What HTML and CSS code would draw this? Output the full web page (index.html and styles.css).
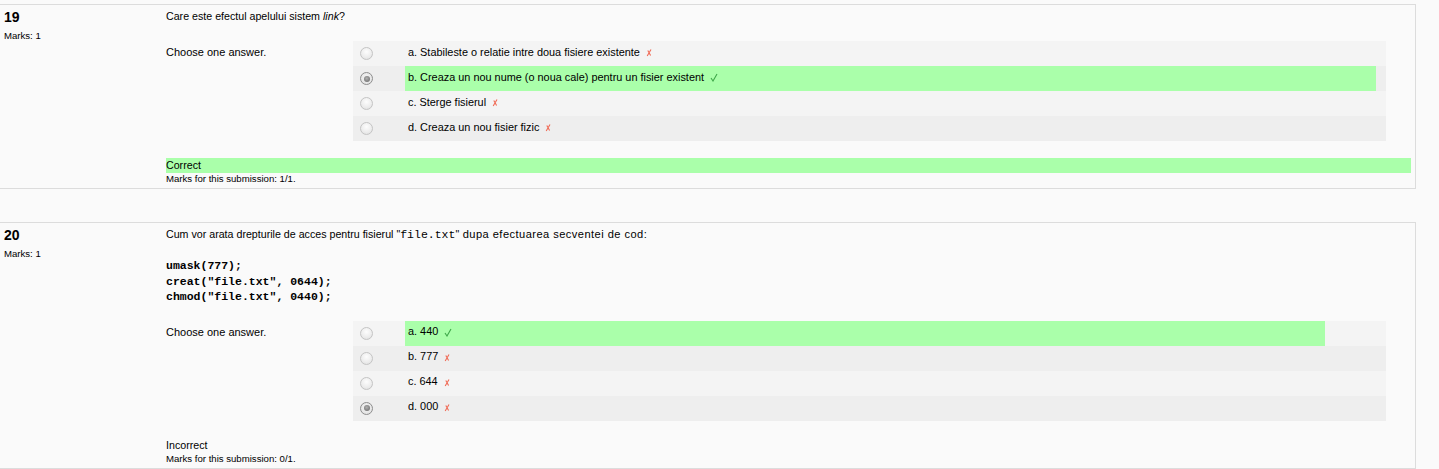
FILE: index.html
```html
<!DOCTYPE html>
<html lang="ro">
<head>
<meta charset="utf-8">
<title>Quiz review</title>
<link rel="stylesheet" href="styles.css">
</head>
<body>
<div class="que q19">
  <div class="info">
    <div class="no">19</div>
    <div class="grade">Marks: 1</div>
  </div>
  <div class="content">
    <div class="qtext">Care este efectul apelului sistem <em>link</em>?</div>
    <div class="ablock">
      <div class="prompt">Choose one answer.</div>
      <div class="answer">
        <div class="row r0">
          <div class="c0"><span class="radio"></span></div>
          <div class="c1"><span>a. Stabileste o relatie intre doua fisiere existente</span><svg class="wrong" width="6" height="9" viewBox="0 0 6 9"><path d="M5 1.5 L1.2 8 M1.8 2.5 L4.6 7.5" stroke="#f06a55" stroke-width="1.1" fill="none"/></svg></div>
        </div>
        <div class="row r1">
          <div class="c0"><span class="radio checked"></span></div>
          <div class="c1 correct"><span>b. Creaza un nou nume (o noua cale) pentru un fisier existent</span><svg class="right" width="8" height="9" viewBox="0 0 8 9"><path d="M1 5 L3 8 L7 1" stroke="#3fa84a" stroke-width="1.1" fill="none"/></svg></div>
        </div>
        <div class="row r0">
          <div class="c0"><span class="radio"></span></div>
          <div class="c1"><span>c. Sterge fisierul</span><svg class="wrong" width="6" height="9" viewBox="0 0 6 9"><path d="M5 1.5 L1.2 8 M1.8 2.5 L4.6 7.5" stroke="#f06a55" stroke-width="1.1" fill="none"/></svg></div>
        </div>
        <div class="row r1">
          <div class="c0"><span class="radio"></span></div>
          <div class="c1"><span>d. Creaza un nou fisier fizic</span><svg class="wrong" width="6" height="9" viewBox="0 0 6 9"><path d="M5 1.5 L1.2 8 M1.8 2.5 L4.6 7.5" stroke="#f06a55" stroke-width="1.1" fill="none"/></svg></div>
        </div>
      </div>
    </div>
    <div class="feedback ok">Correct</div>
    <div class="grading">Marks for this submission: 1/1.</div>
  </div>
</div>

<div class="que q20">
  <div class="info">
    <div class="no">20</div>
    <div class="grade">Marks: 1</div>
  </div>
  <div class="content">
    <div class="qtext">Cum vor arata drepturile de acces pentru fisierul "<code>file.txt</code>"<span class="tail"> dupa efectuarea secventei de cod:</span></div>
    <pre class="code">umask(777);
creat("file.txt", 0644);
chmod("file.txt", 0440);</pre>
    <div class="ablock">
      <div class="prompt">Choose one answer.</div>
      <div class="answer">
        <div class="row r0">
          <div class="c0"><span class="radio"></span></div>
          <div class="c1 correct"><span>a. 440</span><svg class="right" width="8" height="9" viewBox="0 0 8 9"><path d="M1 5 L3 8 L7 1" stroke="#3fa84a" stroke-width="1.1" fill="none"/></svg></div>
        </div>
        <div class="row r1">
          <div class="c0"><span class="radio"></span></div>
          <div class="c1"><span>b. 777</span><svg class="wrong" width="6" height="9" viewBox="0 0 6 9"><path d="M5 1.5 L1.2 8 M1.8 2.5 L4.6 7.5" stroke="#f06a55" stroke-width="1.1" fill="none"/></svg></div>
        </div>
        <div class="row r0">
          <div class="c0"><span class="radio"></span></div>
          <div class="c1"><span>c. 644</span><svg class="wrong" width="6" height="9" viewBox="0 0 6 9"><path d="M5 1.5 L1.2 8 M1.8 2.5 L4.6 7.5" stroke="#f06a55" stroke-width="1.1" fill="none"/></svg></div>
        </div>
        <div class="row r1">
          <div class="c0"><span class="radio checked"></span></div>
          <div class="c1"><span>d. 000</span><svg class="wrong" width="6" height="9" viewBox="0 0 6 9"><path d="M5 1.5 L1.2 8 M1.8 2.5 L4.6 7.5" stroke="#f06a55" stroke-width="1.1" fill="none"/></svg></div>
        </div>
      </div>
    </div>
    <div class="feedback">Incorrect</div>
    <div class="grading">Marks for this submission: 0/1.</div>
  </div>
</div>
</body>
</html>
```

FILE: styles.css
```css
html, body {
  margin: 0;
  padding: 0;
  background: #fafafa;
}

body {
  font-family: "Liberation Sans", Arial, sans-serif;
  font-size: 10.67px;
  color: #000;
}

.que {
  display: flex;
  width: 1415px;
  margin-top: 4px;
  border: 1px solid #dcdcdc;
  border-left: none;
  padding: 4px 0 4px 0;
  background: #fafafa;
}

.q20 {
  margin-top: 33px;
}

.info {
  width: 162px;
  padding-left: 4px;
  flex: none;
}

.no {
  font-size: 14px;
  font-weight: bold;
  line-height: 16px;
}

.grade {
  margin-top: 5px;
  font-size: 9.6px;
  line-height: 12px;
}

.content {
  width: 1245px;
  flex: none;
}

.qtext {
  line-height: 14px;
}

.qtext code {
  font-family: "Liberation Mono", "Courier New", monospace;
  font-size: 11.5px;
}

.qtext .tail {
  font-size: 11.1px;
  letter-spacing: 0.45px;
}

.code {
  margin: 16px 0 16px 0;
  font-family: "Liberation Mono", "Courier New", monospace;
  font-weight: bold;
  font-size: 11.5px;
  line-height: 15.5px;
}

.ablock {
  display: flex;
  align-items: flex-start;
  margin-top: 18px;
}

.q20 .ablock {
  margin-top: 0;
}

.prompt {
  width: 187px;
  flex: none;
  padding-top: 4px;
  line-height: 14px;
  font-size: 11px;
}

.answer {
  width: 1033px;
  flex: none;
  font-size: 10.9px;
}

.row {
  display: flex;
  height: 25px;
}

.r0 {
  background: #f4f4f4;
}

.r1 {
  background: #eeeeee;
}

.c0 {
  width: 52px;
  flex: none;
  display: flex;
  align-items: center;
  padding-left: 7px;
  box-sizing: border-box;
}

.c1 {
  display: flex;
  align-items: center;
  padding-left: 3px;
  padding-bottom: 4px;
  box-sizing: border-box;
}

.q19 .c1 {
  width: 971px;
}

.q20 .c1 {
  width: 920px;
}

.correct {
  background: #aaffaa;
}

.radio {
  display: block;
  width: 13px;
  height: 13px;
  box-sizing: border-box;
  border-radius: 50%;
  border: 1px solid #c4c4c4;
  background: radial-gradient(circle at 50% 35%, #fdfdfd 0%, #ececec 60%, #dcdcdc 100%);
  position: relative;
}

.radio.checked {
  border-color: #8e8e8e;
  background: radial-gradient(circle at 50% 40%, #f4f4f4 0%, #dedede 100%);
}

.radio.checked::after {
  content: "";
  position: absolute;
  left: 2.5px;
  top: 2.5px;
  width: 6px;
  height: 6px;
  border-radius: 50%;
  background: radial-gradient(circle at 45% 40%, #b0b0b0 0%, #7a7a7a 70%, #666 100%);
}

.wrong, .right {
  display: block;
  margin-left: 6px;
  margin-top: 2px;
}

.feedback {
  margin-top: 17px;
  height: 15px;
  line-height: 15px;
}

.feedback.ok {
  background: #aaffaa;
}

.grading {
  font-size: 9.6px;
  line-height: 11px;
}
```
